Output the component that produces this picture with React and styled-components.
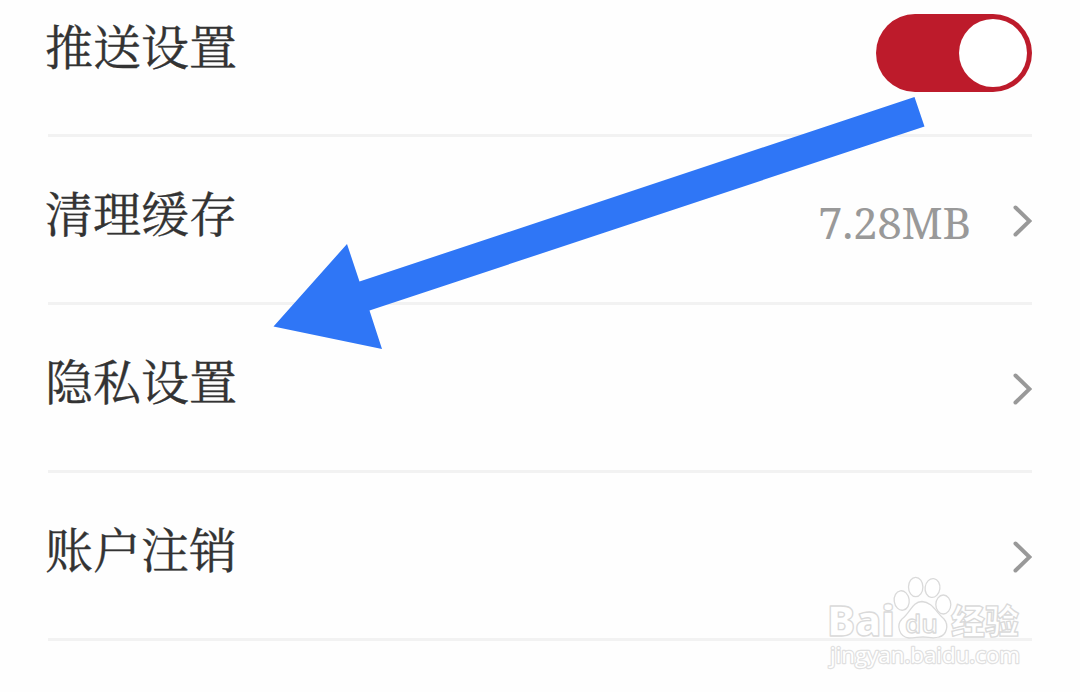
import React from 'react';
import styled, { createGlobalStyle } from 'styled-components';

const GlobalStyle = createGlobalStyle`
  body {
    margin: 0;
    background: #fefefe;
    overflow: hidden;
  }
`;

const Page = styled.main`
  position: relative;
  height: 692px;
  overflow: hidden;
  font-family: 'Noto Serif CJK SC', 'Liberation Serif', 'Noto Sans CJK SC', serif;
`;

const List = styled.ul`
  margin: 0 48px;
  padding: 0;
  list-style: none;
`;

const Row = styled.li`
  display: flex;
  align-items: center;
  box-sizing: border-box;
  height: ${({ $first }) => ($first ? '137px' : '168px')};
  padding-bottom: ${({ $first }) => ($first ? '29px' : '0')};
  border-bottom: 3px solid #f2f2f2;
`;

const Label = styled.span`
  flex: 1;
  margin-left: -3px;
  color: #333;
  font-size: 48px;
  line-height: 60px;
  -webkit-text-stroke: 0.35px #333;
  transform: translateY(-8px);
`;

const Value = styled.span`
  margin-right: 41px;
  color: #999;
  font-family: 'Noto Serif', 'Droid Serif', 'Liberation Serif', serif;
  font-size: 44px;
  line-height: 60px;
  letter-spacing: -0.3px;
  transform: translateY(2px);
`;

const Chevron = styled.svg`
  display: block;
  width: 20px;
  height: 32px;
  fill: none;
  stroke: #999;
  stroke-width: 4;
  stroke-linecap: round;
  transform: translateY(1px);
`;

const Switch = styled.div`
  display: flex;
  justify-content: flex-end;
  box-sizing: border-box;
  width: 156px;
  height: 78px;
  padding: 5px;
  border-radius: 39px;
  background: #bd1b2b;
`;

const Knob = styled.div`
  width: 68px;
  height: 68px;
  border-radius: 50%;
  background: #fff;
`;

const Overlay = styled.svg`
  position: absolute;
  top: 0;
  left: 0;
  pointer-events: none;
`;

const Watermark = styled.g`
  fill: #fff;
  stroke: #dadada;
  stroke-width: 1.3;
  stroke-linejoin: round;
  font-family: 'Open Sans', 'Noto Sans CJK SC', sans-serif;
`;

const SiteUrl = styled.text`
  stroke: #e0e0e0;
  stroke-width: 2.4;
  paint-order: stroke;
  font-size: 22px;
`;

const items = [
  { label: '推送设置', toggle: true },
  { label: '清理缓存', value: '7.28MB' },
  { label: '隐私设置' },
  { label: '账户注销' },
];

const App = () => {
  return (
    <Page lang="zh-CN">
      <GlobalStyle />
      <List>
        {items.map((item, i) => (
          <Row key={item.label} $first={i === 0}>
            <Label>{item.label}</Label>
            {item.value && <Value>{item.value}</Value>}
            {item.toggle ? (
              <Switch role="switch" aria-checked="true">
                <Knob />
              </Switch>
            ) : (
              <Chevron viewBox="0 0 20 32">
                <path d="M3.500 2.500 L17.5 16 L3.500 29.500" />
              </Chevron>
            )}
          </Row>
        ))}
      </List>

      <Overlay width="1080" height="692" viewBox="0 0 1080 692">
        <polygon
          fill="#2f76f6"
          points="914.5,97 924.5,126.5 369.5,310.5 382,349 273.5,326.5 347,244 359.5,281.5"
        />
        <Watermark>
          <text x="827" y="636" fontSize="43" fontWeight="800" textLength="68" lengthAdjust="spacingAndGlyphs">Bai</text>
          <ellipse cx="901.7" cy="600.5" rx="7.5" ry="9.8" transform="rotate(-8 901.7 600.5)" />
          <ellipse cx="915.7" cy="587" rx="7.2" ry="9.7" />
          <ellipse cx="932.5" cy="588" rx="7.4" ry="9.5" transform="rotate(8 932.5 588)" />
          <ellipse cx="943.3" cy="604.5" rx="7.5" ry="9.5" />
          <path d="M922 601.500C912 602 911 612 902 619C896 625 899 637 909 638C915 638 918 637 923 637C929 637 933 639 939 637C947 635 949 625 944 619C936 612 932 602 922 601.500Z" />
          <text x="905" y="632.500" fontSize="26" fontWeight="600" textLength="33" lengthAdjust="spacingAndGlyphs">du</text>
          <text x="951" y="634" fontSize="34" fontWeight="900" textLength="68" lengthAdjust="spacingAndGlyphs">经验</text>
          <SiteUrl x="830" y="662.500" textLength="190" lengthAdjust="spacingAndGlyphs">jingyan.baidu.com</SiteUrl>
        </Watermark>
      </Overlay>
    </Page>
  );
};

export default App;
